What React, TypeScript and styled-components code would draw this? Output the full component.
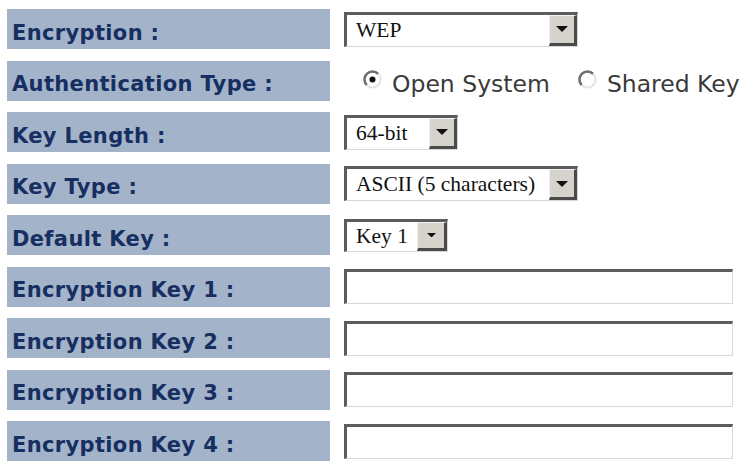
import React from "react";
import styled, { createGlobalStyle } from "styled-components";

const GlobalStyle = createGlobalStyle`
  html, body {
    margin: 0;
    padding: 0;
    background: #ffffff;
  }
`;

type Row = {
  label: string;
  field: React.ReactNode;
};

const Form = styled.div`
  display: grid;
  grid-template-columns: 323px 1fr;
  grid-auto-rows: 40px;
  column-gap: 14px;
  row-gap: 11.5px;
  padding: 9px 0 0 7px;
  overflow: hidden;
  width: 733px;
`;

const LabelCell = styled.div`
  display: flex;
  align-items: center;
  box-sizing: border-box;
  padding: 7px 0 0 5px;
  background: #a3b3c9;
  color: #172f60;
  font-family: "DejaVu Sans", Verdana, sans-serif;
  font-weight: bold;
  font-size: 21px;
  letter-spacing: 0.35px;
  white-space: nowrap;
`;

const FieldCell = styled.div`
  display: flex;
  align-items: center;
  min-width: 0;
  white-space: nowrap;
`;

const SelectBox = styled.div<{ $w: number; $h: number }>`
  display: flex;
  box-sizing: border-box;
  width: ${(p) => p.$w}px;
  height: ${(p) => p.$h}px;
  border-style: solid;
  border-width: 3px 1px 1px 3px;
  border-color: #5c5c5c #d8d8d8 #d8d8d8 #5c5c5c;
  background: #ffffff;
`;

const SelectValue = styled.div`
  flex: 1;
  display: flex;
  align-items: center;
  padding-left: 9px;
  font-family: "Liberation Serif", "Times New Roman", serif;
  font-size: 21.5px;
  color: #111111;
  overflow: hidden;
`;

const SelectButton = styled.div<{ $bw: number }>`
  display: flex;
  align-items: center;
  justify-content: center;
  box-sizing: border-box;
  width: ${(p) => p.$bw}px;
  background: #d6d3cc;
  border-style: solid;
  border-width: 1px 3px 3px 1px;
  border-color: #f2f2f2 #4a4a4a #4a4a4a #f2f2f2;
`;

const TextBox = styled.div`
  box-sizing: border-box;
  width: 389px;
  height: 35px;
  border-style: solid;
  border-width: 3px 1px 1px 3px;
  border-color: #5c5c5c #d8d8d8 #d8d8d8 #5c5c5c;
  background: #ffffff;
`;

const RadioGroup = styled.div`
  display: flex;
  align-items: center;
  margin-top: 6px;
  padding-left: 19px;
  font-family: "DejaVu Sans", Verdana, sans-serif;
  font-size: 23.5px;
  color: #3a3a3a;
`;

const RadioOption = styled.span`
  display: inline-flex;
  align-items: center;
  gap: 10px;
  margin-right: 28px;
`;

const RadioIcon = styled.svg`
  width: 19px;
  height: 19px;
  margin-top: -8px;
  flex: none;
`;

const Radio: React.FC<{ checked?: boolean }> = ({ checked }) => (
  <RadioIcon viewBox="0 0 19 19">
    <circle cx="9.5" cy="9.5" r="8" fill="#ffffff" />
    <path d="M3.8 15.2 A8 8 0 0 1 15.2 3.8" fill="none" stroke="#6e6e6e" strokeWidth="2.6" />
    <path d="M15.2 3.8 A8 8 0 0 1 3.8 15.2" fill="none" stroke="#e4e4e4" strokeWidth="2" />
    {checked && <circle cx="9.5" cy="9.5" r="3" fill="#111111" />}
  </RadioIcon>
);

const Select: React.FC<{ value: string; w: number; h?: number; bw?: number; aw?: number }> = ({
  value,
  w,
  h = 35,
  bw = 28,
  aw = 12,
}) => (
  <SelectBox $w={w} $h={h}>
    <SelectValue>{value}</SelectValue>
    <SelectButton $bw={bw}>
      <svg width={aw} height={aw / 2} viewBox="0 0 12 6">
        <path d="M0 0 H12 L6 6 Z" fill="#111111" />
      </svg>
    </SelectButton>
  </SelectBox>
);

const rows: Row[] = [
  { label: "Encryption :", field: <Select value="WEP" w={234} /> },
  {
    label: "Authentication Type :",
    field: (
      <RadioGroup>
        <RadioOption>
          <Radio checked />
          Open System
        </RadioOption>
        <RadioOption>
          <Radio />
          Shared Key
        </RadioOption>
      </RadioGroup>
    ),
  },
  { label: "Key Length :", field: <Select value="64-bit" w={114} /> },
  { label: "Key Type :", field: <Select value="ASCII (5 characters)" w={234} /> },
  { label: "Default Key :", field: <Select value="Key 1" w={104} h={33} bw={30} aw={9} /> },
  { label: "Encryption Key 1 :", field: <TextBox /> },
  { label: "Encryption Key 2 :", field: <TextBox /> },
  { label: "Encryption Key 3 :", field: <TextBox /> },
  { label: "Encryption Key 4 :", field: <TextBox /> },
];

const App: React.FC = () => (
  <>
    <GlobalStyle />
    <Form>
      {rows.map((r) => (
        <React.Fragment key={r.label}>
          <LabelCell>{r.label}</LabelCell>
          <FieldCell>{r.field}</FieldCell>
        </React.Fragment>
      ))}
    </Form>
  </>
);

export default App;
